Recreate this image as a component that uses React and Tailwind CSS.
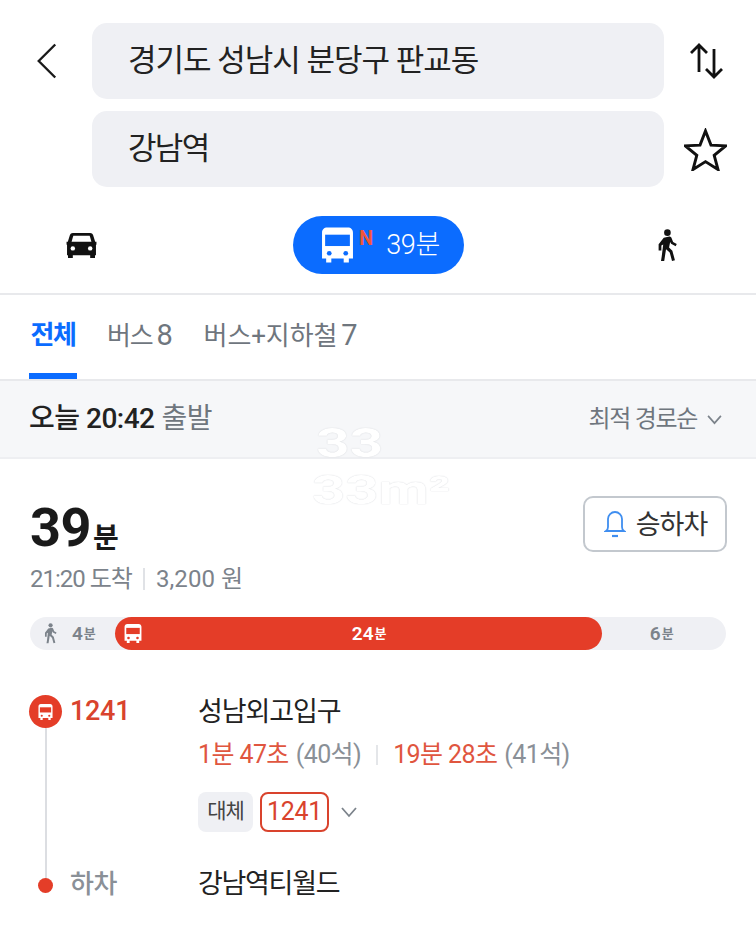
const KR = "font-['Roboto','Noto_Sans_CJK_KR',sans-serif]";

function BusIcon({ className, window = "#0b6cff", body = "white" }) {
  return (
    <svg viewBox="0 0 32 36" className={className}>
      <path d="M1 6c0-3 2-5 5-5h20c3 0 5 2 5 5v25h-4v4h-5v-4H10v4H5v-4H1z" fill={body} />
      <rect x="4" y="8" width="24" height="11" fill={window} />
      <circle cx="8" cy="26" r="2.3" fill={window} />
      <circle cx="24" cy="26" r="2.3" fill={window} />
    </svg>
  );
}

function WalkIcon({ className, color = "#111" }) {
  return (
    <svg viewBox="0 0 24 36" className={className} fill={color}>
      <circle cx="13" cy="4" r="3.6" />
      <path d="M9 9.5l6-1.2c1.2 0 2 .6 2.5 1.6l1.7 4.2 4 2.2-1.2 2.4-5-2.6-1-2-1.2 6 3.6 3.6 2.8 10.3-3.2.8-2.5-9.2-4-3.6-2 12.8H6l.8-5 1.6-13-2 1.3v5.4H3.400v-7z" />
    </svg>
  );
}

function Chevron({ className, color = "#7c838b" }) {
  return (
    <svg viewBox="0 0 18 12" className={className} fill="none" stroke={color} strokeWidth="1.8">
      <path d="M2 2l7 8 7-8" />
    </svg>
  );
}

export default function App() {
  return (
    <div className={`relative w-[756px] h-[932px] overflow-hidden bg-white ${KR}`}>
      {/* 검색 영역 */}
      <div className="h-[293px]">
        <div className="flex pt-[23px]">
          <div className="w-[92px] h-[76px] flex items-center pl-[36px]">
            <svg viewBox="0 0 24 40" className="w-[22px] h-[38px]" fill="none" stroke="#1a1a1a" strokeWidth="2.6">
              <path d="M21 2L3 20l18 18" />
            </svg>
          </div>
          <div className="w-[572px] flex flex-col gap-[12px]">
            <div className="h-[76px] rounded-[15px] bg-[#eff0f4] flex items-center pl-[36px] pt-[1px] text-[31px] tracking-[-1px] text-[#222]">
              경기도 성남시 분당구 판교동
            </div>
            <div className="h-[76px] rounded-[15px] bg-[#eff0f4] flex items-center pl-[36px] text-[31px] tracking-[-1.7px] text-[#222]">
              강남역
            </div>
          </div>
          <div className="w-[84px] pr-[1px] flex flex-col gap-[12px] items-center">
            <div className="h-[76px] flex items-center">
              <svg viewBox="0 0 36 36" className="w-[36px] h-[36px]" fill="none" stroke="#111" strokeWidth="2.8">
                <path d="M11 29V2M3 10l8-8 8 8M26 6v28M18 26l8 8 8-8" />
              </svg>
            </div>
            <div className="h-[76px] flex items-center">
              <svg viewBox="0 0 44 44" className="w-[43px] h-[43px]" fill="none" stroke="#111" strokeWidth="3" strokeLinejoin="miter">
                <path d="M22 3l5.600 14.500 15 .8-11.700 9.700 3.900 14.500L22 34.400 9.200 42.500l3.900-14.500L1.400 18.300l15-.8z" />
              </svg>
            </div>
          </div>
        </div>
        <div className="flex items-center mt-[29px] h-[58px]">
          <div className="w-[163px] flex justify-center">
            <svg viewBox="0 0 32 28" className="w-[31px] h-[27px]" fill="#111">
              <path d="M7 1h18c1.500 0 2.500.8 3 2l2.200 7H31.500v3l-.5.500V24h-1v3h-5v-3H7v3H2v-3H1V13.500l-.5-.5v-3h1.300L4 3c.5-1.200 1.500-2 3-2z" />
              <path d="M7.500 4h17l1.800 6H5.700z" fill="white" />
              <circle cx="7" cy="17" r="2.300" fill="white" />
              <circle cx="25" cy="17" r="2.300" fill="white" />
            </svg>
          </div>
          <div className="ml-[130px] w-[171px] h-[58px] rounded-full bg-[#0b6cff] flex items-center pl-[28px]">
            <BusIcon className="w-[33px] h-[38px]" />
            <span className="ml-[5px] -mt-[14px] text-[20px] font-bold leading-none text-[#f0563a]">N</span>
            <span className="ml-[13px] text-[27px] tracking-[-0.3px] font-light text-white">39분</span>
          </div>
          <div className="ml-[190px]">
            <WalkIcon className="w-[25px] h-[33px]" />
          </div>
        </div>
      </div>

      {/* 탭 */}
      <div className="h-[88px] border-t-2 border-b-2 border-[#e8e9ec] flex pl-[29px] gap-[30px] text-[#6f767e]">
        <div className="h-[84px] w-[48px] border-b-[6px] border-[#0b6cff] flex justify-center pt-[22px]">
          <span className="text-[26px] leading-[36px] font-bold tracking-[-1.400px] text-[#0b6cff] whitespace-nowrap">전체</span>
        </div>
        <div className="pt-[22px] text-[26px] leading-[36px] tracking-[-1.200px] whitespace-nowrap">
          버스<span className="ml-[4px] text-[29px]">8</span>
        </div>
        <div className="ml-[2px] pt-[22px] text-[26px] leading-[36px] tracking-[-0.100px] whitespace-nowrap">
          버스+지하철<span className="ml-[4px] text-[29px]">7</span>
        </div>
      </div>

      {/* 출발 시간 */}
      <div className="h-[78px] bg-[#f6f7f9] border-b-2 border-[#eeeff2] flex items-center justify-between pl-[29px] pr-[33px]">
        <div className="text-[28px] tracking-[-0.5px]">
          <span className="font-medium text-[#222]">오늘 20:42</span>
          <span className="ml-[7px] text-[#6f767e]">출발</span>
        </div>
        <div className="flex items-center gap-[9px] text-[24px] tracking-[-1.300px] text-[#6f767e]">
          최적 경로순
          <Chevron className="w-[17px] h-[11px]" />
        </div>
      </div>

      {/* 요약 */}
      <div className="px-[30px] pt-[38px]">
        <div className="flex justify-between items-start">
          <div>
            <div className="flex items-end h-[62px] text-[#1a1a1a] font-bold">
              <span className="text-[54px] leading-[62px] tracking-[-0.5px]">39</span>
              <span className="ml-[2px] text-[28px] leading-[40px] font-semibold">분</span>
            </div>
            <div className="mt-[3px] flex items-center text-[24px] leading-[34px] text-[#7c838b]">
              <span className="tracking-[-1px]">21:20 도착</span>
              <span className="mx-[11px] w-[2px] h-[22px] bg-[#e0e2e6]" />
              <span className="tracking-[0.1px]">3,200 원</span>
            </div>
          </div>
          <div className="mr-[-1px] w-[144px] h-[56px] -mt-[1px] rounded-[10px] border-2 border-[#c3c8ce] flex items-center justify-center gap-[10px] pl-[1px]">
            <svg viewBox="0 0 22 28" className="w-[22px] h-[28px]" fill="none" stroke="#3f8ef0" strokeWidth="1.800">
              <path d="M2 21c1.500-1 2-2.500 2-4V9a7 7 0 0 1 14 0v8c0 1.500.5 3 2 4z" />
              <path d="M8 26h6" strokeWidth="2.200" />
            </svg>
            <span className="pt-[2px] text-[27px] tracking-[-1px] text-[#333]">승하차</span>
          </div>
        </div>

        {/* 구간 막대 */}
        <div className="mt-[21px] relative h-[33px] rounded-full bg-[#eff0f4] flex items-center text-[#7c838b] font-semibold">
          <WalkIcon className="ml-[11px] w-[18px] h-[21px]" color="#7c838b" />
          <span className="ml-[13px] text-[19px] leading-none">4</span>
          <span className="ml-[1px] text-[13px] leading-none">분</span>
          <div className="ml-[19px] w-[487px] h-[33px] rounded-full bg-[#e43d28] flex items-center pl-[9px] text-white">
            <BusIcon className="w-[18px] h-[21px]" window="#e43d28" />
            <div className="ml-[210px] flex items-center">
              <span className="text-[19px] leading-none">24</span>
              <span className="ml-[1px] text-[13px] leading-none">분</span>
            </div>
          </div>
          <span className="ml-[48px] text-[19px] leading-none">6</span>
          <span className="ml-[1px] text-[13px] leading-none">분</span>
        </div>

        {/* 경로 상세 */}
        <div className="mt-[45px] -ml-[1px] flex">
          <div className="w-[33px] flex flex-col items-center">
            <div className="w-[33px] h-[33px] rounded-full bg-[#e43d28] flex items-center justify-center shrink-0">
              <BusIcon className="w-[15px] h-[18px]" window="#e43d28" />
            </div>
            <div className="w-[2px] h-[152px] bg-[#dcdee2]" />
            <div className="w-[15px] h-[15px] -mt-[2px] rounded-full bg-[#e43d28] shrink-0" />
          </div>
          <div className="w-[136px] pl-[8px]">
            <div className="h-[33px] flex items-center text-[27px] font-medium tracking-[-0.3px] text-[#d9432d]">1241</div>
            <div className="mt-[141px] h-[30px] flex items-center text-[26px] font-medium tracking-[-0.5px] text-[#8a9097]">하차</div>
          </div>
          <div className="-mt-[1px]">
            <div className="h-[36px] flex items-center text-[27px] tracking-[-1.100px] text-[#222]">성남외고입구</div>
            <div className="mt-[7px] h-[36px] flex items-center text-[25px] tracking-[-0.6px] whitespace-nowrap">
              <span className="text-[#e0563f]">1분 47초</span>
              <span className="ml-[7px] text-[#8a9097]">(40석)</span>
              <span className="mx-[15px] w-[2px] h-[20px] bg-[#e4e6e9]" />
              <span className="text-[#e0563f]">19분 28초</span>
              <span className="ml-[7px] text-[#8a9097]">(41석)</span>
            </div>
            <div className="mt-[19px] flex items-center">
              <div className="w-[55px] h-[40px] rounded-[8px] bg-[#eff0f4] flex items-center justify-center text-[21px] tracking-[-1px] text-[#444]">대체</div>
              <div className="ml-[7px] w-[69px] h-[40px] rounded-[8px] border-2 border-[#d9432d] flex items-center justify-center text-[25px] tracking-[-0.3px] text-[#d9432d]">1241</div>
              <Chevron className="ml-[11px] w-[18px] h-[12px]" />
            </div>
            <div className="mt-[34px] h-[36px] flex items-center text-[27px] tracking-[-1.300px] text-[#222]">강남역티월드</div>
          </div>
        </div>
      </div>

      {/* 워터마크 */}
      <div className="absolute left-[312px] top-[420px] origin-left scale-x-[1.45] text-[40px] leading-[47px] font-bold text-white [text-shadow:0_0_1px_#c9ccd1] pointer-events-none whitespace-nowrap">
        <div className="pl-[3px]">33</div>
        <div>33m²</div>
      </div>
    </div>
  );
}
